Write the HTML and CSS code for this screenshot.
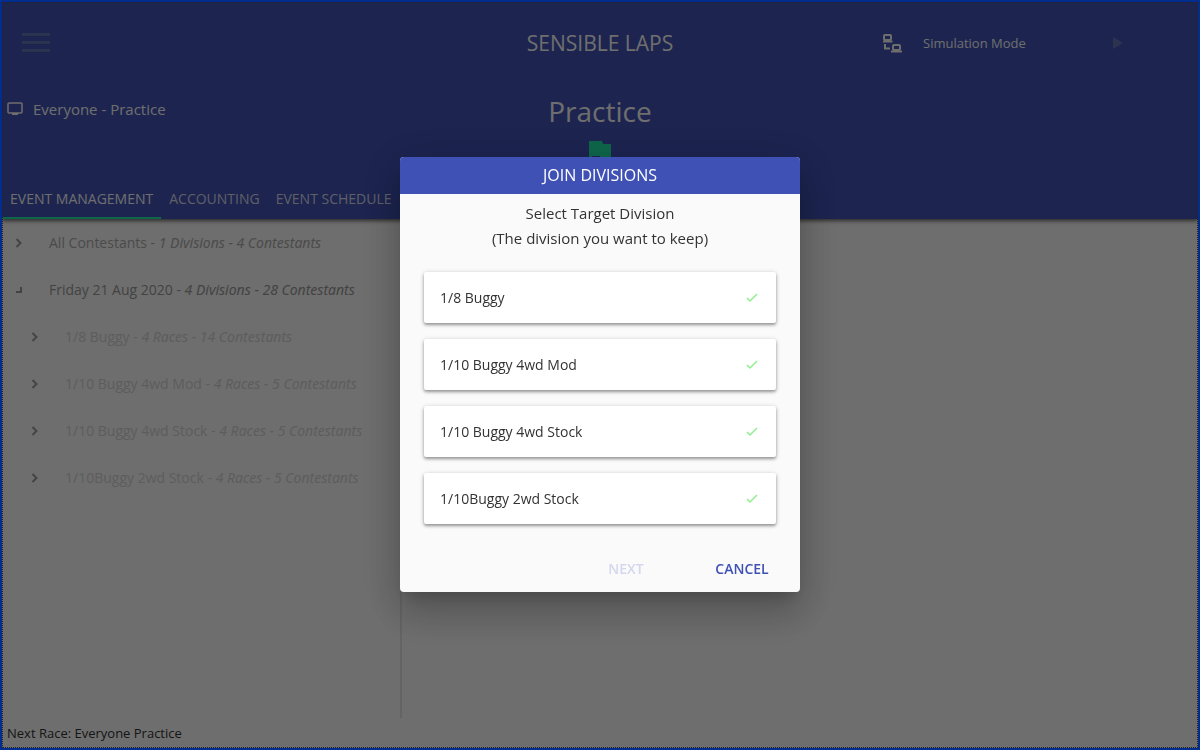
FILE: index.html
```html
<!DOCTYPE html>
<html lang="en">
<head>
	<meta charset="utf-8">
	<title>Sensible Laps</title>
	<link rel="stylesheet" href="styles.css">
</head>
<body>
	<div class="app">
		<header class="header">
			<div class="top-row">
				<button type="button" class="menu-button" aria-label="Menu">
					<svg width="30" height="20" viewBox="0 0 30 20"><path d="M1 0h28v3H1zM1 8h28v3H1zM1 16h28v3H1z" fill="currentColor"/></svg>
				</button>
				<h1 class="brand">SENSIBLE LAPS</h1>
				<div class="simulation">
					<span class="mode">
						<svg width="20" height="20" viewBox="0 0 20 20" fill="none" stroke="currentColor" stroke-width="2"><rect x="1" y="2" width="7" height="5" rx="1"/><path d="M0 8.500h9.500M2 11v4.500h5"/><rect x="10" y="12" width="7" height="5" rx="1"/><path d="M8 18.500h11"/></svg>
						Simulation Mode
					</span>
					<button type="button" class="play-button" aria-label="Start" disabled>
						<svg width="10" height="12" viewBox="0 0 10 12"><path d="M0 0l10 6-10 6z" fill="currentColor"/></svg>
					</button>
				</div>
			</div>
			<div class="race-row">
				<div class="race-name">
					<svg width="16" height="14" viewBox="0 0 16 14"><rect x="1" y="1" width="14" height="10" rx="1" fill="none" stroke="currentColor" stroke-width="1.500"/><path d="M5 11h6v2H5z" fill="currentColor"/></svg>
					Everyone - Practice
				</div>
				<div class="race-status">
					<h2>Practice</h2>
					<svg class="flag" width="22" height="28" viewBox="0 0 22 28"><path d="M0 0h13l1 3h8v15H12l-1-3H3v13H0z" fill="currentColor"/></svg>
				</div>
			</div>
			<nav class="tabs">
				<a href="#management" class="tab active">EVENT MANAGEMENT</a>
				<a href="#accounting" class="tab">ACCOUNTING</a>
				<a href="#schedule" class="tab">EVENT SCHEDULE</a>
			</nav>
		</header>
		<main class="content">
			<ul class="tree">
				<li><button type="button" class="node"><svg class="arrow" viewBox="0 0 8 10"><path d="M1.500 1l4 4-4 4"/></svg><span>All Contestants - <i>1 Divisions - 4 Contestants</i></span></button></li>
				<li>
					<button type="button" class="node open"><svg class="arrow" viewBox="0 0 8 10"><path d="M1 7h5V2"/></svg><span>Friday 21 Aug 2020 - <i>4 Divisions - 28 Contestants</i></span></button>
					<ul class="children">
						<li><button type="button" class="node"><svg class="arrow" viewBox="0 0 8 10"><path d="M1.500 1l4 4-4 4"/></svg><span>1/8 Buggy - <i>4 Races - 14 Contestants</i></span></button></li>
						<li><button type="button" class="node"><svg class="arrow" viewBox="0 0 8 10"><path d="M1.500 1l4 4-4 4"/></svg><span>1/10 Buggy 4wd Mod - <i>4 Races - 5 Contestants</i></span></button></li>
						<li><button type="button" class="node"><svg class="arrow" viewBox="0 0 8 10"><path d="M1.500 1l4 4-4 4"/></svg><span>1/10 Buggy 4wd Stock - <i>4 Races - 5 Contestants</i></span></button></li>
						<li><button type="button" class="node"><svg class="arrow" viewBox="0 0 8 10"><path d="M1.500 1l4 4-4 4"/></svg><span>1/10Buggy 2wd Stock - <i>4 Races - 5 Contestants</i></span></button></li>
					</ul>
				</li>
			</ul>
		</main>
		<footer class="footer">Next Race: Everyone Practice</footer>
	</div>

	<div class="overlay">
		<div class="dialog" role="dialog" aria-labelledby="dialog-title">
			<h2 class="dialog-title" id="dialog-title">JOIN DIVISIONS</h2>
			<p class="dialog-text">Select Target Division<br>(The division you want to keep)</p>
			<div class="divisions">
				<button type="button" class="division">1/8 Buggy<svg class="check" viewBox="0 0 12 12"><path d="M1 6l3 3 7-7"/></svg></button>
				<button type="button" class="division">1/10 Buggy 4wd Mod<svg class="check" viewBox="0 0 12 12"><path d="M1 6l3 3 7-7"/></svg></button>
				<button type="button" class="division">1/10 Buggy 4wd Stock<svg class="check" viewBox="0 0 12 12"><path d="M1 6l3 3 7-7"/></svg></button>
				<button type="button" class="division">1/10Buggy 2wd Stock<svg class="check" viewBox="0 0 12 12"><path d="M1 6l3 3 7-7"/></svg></button>
			</div>
			<div class="actions">
				<button type="button" class="action" disabled>NEXT</button>
				<button type="button" class="action">CANCEL</button>
			</div>
		</div>
	</div>
</body>
</html>
```
FILE: styles.css
```css
* {
	box-sizing: border-box;
}
body {
	margin: 0;
	font-family: "Open Sans", "Noto Sans", sans-serif;
	font-size: 14px;
	background-color: #fafafa;
}
h1, h2, p, ul {
	margin: 0;
	padding: 0;
	font-weight: normal;
}
ul {
	list-style: none;
}
button {
	font: inherit;
	color: inherit;
	background: none;
	border: none;
	padding: 0;
	cursor: pointer;
}
svg {
	flex: none;
}
.app {
	min-height: 100vh;
	padding: 2px;
	display: flex;
	flex-direction: column;
}

/* header */
.header {
	background-color: #4052b5;
	color: #fafafa;
	box-shadow: 0 2px 4px rgba(0,0,0,0.6);
}
.top-row, .race-row {
	display: grid;
	grid-template-columns: 1fr 160px 1fr;
}
.top-row {
	align-items: center;
	height: 82px;
	padding: 0 19px;
}
.menu-button {
	justify-self: start;
	display: flex;
	color: #6574b4;
}
.brand {
	font-size: 21px;
	text-align: center;
}
.simulation {
	display: flex;
	justify-content: flex-end;
	padding-right: 37px;
}
.mode {
	display: flex;
	align-items: center;
	gap: 20px;
	width: 211px;
	font-size: 13px;
}
.play-button {
	width: 48px;
	color: #6574b4;
}
.play-button svg {
	display: block;
	margin: auto;
}
.race-row {
	height: 95px;
	padding: 0 5px;
}
.race-name {
	display: flex;
	align-items: center;
	gap: 10px;
	height: 50px;
	font-size: 15px;
}
.race-status {
	text-align: center;
}
.race-status h2 {
	font-size: 28px;
	line-height: 54px;
}
.flag {
	display: block;
	margin: 3px auto 0;
	color: #20e8a8;
}
.tabs {
	display: flex;
	height: 40px;
}
.tab {
	padding: 0 8px;
	font-weight: 500;
	line-height: 40px;
	color: #d8dae8;
	text-decoration: none;
	border-bottom: 2px solid transparent;
}
.tab.active {
	color: #fafafa;
	border-bottom-color: #20e8a8;
}

/* event tree */
.content {
	flex: 1;
	display: flex;
}
.tree {
	width: 400px;
	border-right: 2px solid #e4e4e4;
}
.tree i {
	font-family: "Noto Sans", "Open Sans", sans-serif;
}
.node {
	display: flex;
	align-items: center;
	width: 100%;
	height: 47px;
	padding-left: 13px;
	text-align: left;
	color: #ababab;
}
.node.open {
	color: #989898;
}
.children .node {
	padding-left: 29px;
	color: #d4d4d4;
}
.arrow {
	width: 8px;
	height: 10px;
	margin-right: 26px;
	fill: none;
	stroke: #9c9c9c;
	stroke-width: 2;
}
.footer {
	padding: 0 5px;
	font-size: 13px;
	line-height: 30px;
	color: #333;
}

/* dialog */
.overlay {
	position: fixed;
	inset: 0;
	display: flex;
	align-items: center;
	justify-content: center;
	padding-bottom: 1px;
	background-color: rgba(0,0,0,0.56);
	border: 2px solid #002d8f;
	outline: 1px dotted #222;
	outline-offset: -3px;
}
.dialog {
	width: 400px;
	background-color: #fafafa;
	color: #333;
	border-radius: 4px;
	overflow: hidden;
	box-shadow: 0 11px 15px -7px rgba(0,0,0,0.2), 0 24px 38px 3px rgba(0,0,0,0.14), 0 9px 46px 8px rgba(0,0,0,0.12);
}
.dialog-title {
	font-size: 16px;
	line-height: 37px;
	text-align: center;
	background-color: #3f51b5;
	color: #fff;
}
.dialog-text {
	padding-top: 7px;
	font-size: 15px;
	line-height: 25px;
	text-align: center;
}
.divisions {
	display: flex;
	flex-direction: column;
	gap: 16px;
	padding: 21px 24px;
}
.division {
	display: flex;
	align-items: center;
	justify-content: space-between;
	height: 51px;
	padding: 0 18px 0 16px;
	background-color: #fff;
	border-radius: 2px;
	box-shadow: 0 1px 5px rgba(0,0,0,0.2), 0 2px 3px rgba(0,0,0,0.3);
}
.check {
	width: 12px;
	height: 12px;
	fill: none;
	stroke: #90ee90;
	stroke-width: 1.5;
}
.actions {
	display: flex;
	justify-content: flex-end;
	gap: 28px;
	padding: 5px 14px 6px;
}
.action {
	min-width: 88px;
	height: 36px;
	font-weight: 600;
	color: #3f51b5;
}
.action:disabled {
	color: #d4d8ee;
}
```
